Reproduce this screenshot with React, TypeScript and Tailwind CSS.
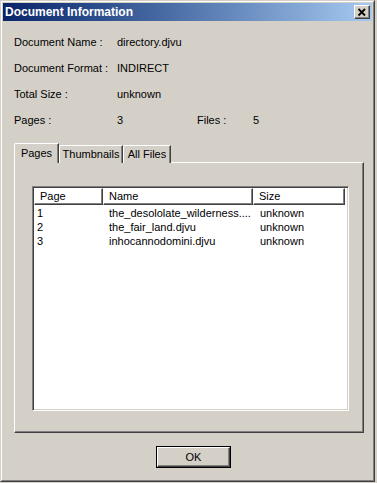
import React from 'react';

const rows = [
	{ page: '1', name: 'the_desololate_wilderness....', size: 'unknown' },
	{ page: '2', name: 'the_fair_land.djvu', size: 'unknown' },
	{ page: '3', name: 'inhocannodomini.djvu', size: 'unknown' },
];

function InfoRow({ label, value }: { label: string; value: string }) {
	return (
		<div className="flex h-[13px] leading-[13px]">
			<div className="w-[103px]">{label}</div>
			<div>{value}</div>
		</div>
	);
}

function Tab({ label, active, width }: { label: string; active?: boolean; width: string }) {
	return (
		<div
			className={
				active
					? `relative z-10 h-[20px] ${width} bg-[#d4d0c8] border-l border-t border-white rounded-tl-[2px] border-r border-r-[#404040] shadow-[inset_-1px_0_0_#808080] flex items-start justify-center pt-[3px] leading-[13px]`
					: `h-[18px] ${width} bg-[#d4d0c8] border-l border-t border-white rounded-tl-[2px] border-r border-r-[#404040] shadow-[inset_-1px_0_0_#808080] flex items-start justify-center pt-[2px] leading-[13px]`
			}
		>
			{label}
		</div>
	);
}

function HeaderCell({ label, width }: { label: string; width: string }) {
	return (
		<div
			className={`${width} h-[17px] border-l border-t border-white border-r border-b border-r-[#404040] border-b-[#404040] shadow-[inset_-1px_-1px_0_#808080] pl-[5px] leading-[14px]`}
		>
			{label}
		</div>
	);
}

export default function App() {
	return (
		<div
			className="w-[377px] h-[483px] bg-[#d4d0c8] overflow-hidden text-[11px] text-black"
			style={{ fontFamily: '"Liberation Sans", Arial, sans-serif' }}
		>
			<div className="w-[375px] h-[482px] border border-l-[#d4d0c8] border-t-[#d4d0c8] border-r-[#404040] border-b-[#404040]">
				<div className="h-full border border-l-white border-t-white border-r-[#808080] border-b-[#808080] p-[1px] flex flex-col">
					{/* title bar */}
					<div className="h-[18px] shrink-0 flex items-center justify-between pl-[2px] pr-[2px] bg-gradient-to-r from-[#0a246a] to-[#a6caf0]">
						<span className="text-white font-bold text-[12px] leading-[14px]">Document Information</span>
						<button className="w-[16px] h-[14px] bg-[#d4d0c8] border border-l-white border-t-white border-r-[#404040] border-b-[#404040] shadow-[inset_-1px_-1px_0_#808080] flex items-center justify-center p-0">
							<svg width="10" height="9" viewBox="0 0 10 9">
								<path d="M1.5 1 L8 7.5 M8 1 L1.5 7.5" stroke="#000" strokeWidth="1.8" fill="none" />
							</svg>
						</button>
					</div>

					<div className="pl-[11px] pt-[15px] flex flex-col gap-[13px]">
						<InfoRow label="Document Name :" value="directory.djvu" />
						<InfoRow label="Document Format :" value="INDIRECT" />
						<InfoRow label="Total Size :" value="unknown" />
						<div className="flex h-[13px] leading-[13px]">
							<div className="w-[103px]">Pages :</div>
							<div className="w-[80px]">3</div>
							<div className="w-[56px]">Files :</div>
							<div>5</div>
						</div>
					</div>

					{/* tabs */}
					<div className="pl-[11px] mt-[16px]">
						<div className="flex items-end h-[20px]">
							<Tab label="Pages" active width="w-[45px]" />
							<Tab label="Thumbnails" width="w-[64px]" />
							<Tab label="All Files" width="w-[48px]" />
						</div>
						<div className="-mt-[1px] w-[350px] h-[271px] border-l border-t border-white border-r border-b border-r-[#404040] border-b-[#404040] shadow-[inset_-1px_-1px_0_#808080] pl-[17px] pt-[23px]">
							<div className="w-[317px] h-[225px] bg-white border border-t-[#808080] border-l-[#808080] border-r-white border-b-white shadow-[inset_1px_1px_0_#404040,inset_-1px_-1px_0_#d4d0c8] p-[1px]">
								<div className="flex">
									<HeaderCell label="Page" width="w-[69px]" />
									<HeaderCell label="Name" width="w-[150px]" />
									<HeaderCell label="Size" width="w-[92px]" />
								</div>
								<div className="pt-[1px]">
									{rows.map((r) => (
										<div key={r.page} className="flex h-[14px] leading-[14px]">
											<div className="w-[69px] pl-[3px]">{r.page}</div>
											<div className="w-[150px] pl-[6px] whitespace-nowrap overflow-hidden">{r.name}</div>
											<div className="w-[92px] pl-[7px]">{r.size}</div>
										</div>
									))}
								</div>
							</div>
						</div>
					</div>

					<div className="mt-[13px] pl-[153px]">
						<button className="w-[75px] h-[22px] border border-black bg-[#d4d0c8] p-0">
							<div className="h-full border border-l-white border-t-white border-r-[#404040] border-b-[#404040] shadow-[inset_-1px_-1px_0_#808080] flex items-center justify-center leading-[13px]">
								OK
							</div>
						</button>
					</div>
				</div>
			</div>
		</div>
	);
}
